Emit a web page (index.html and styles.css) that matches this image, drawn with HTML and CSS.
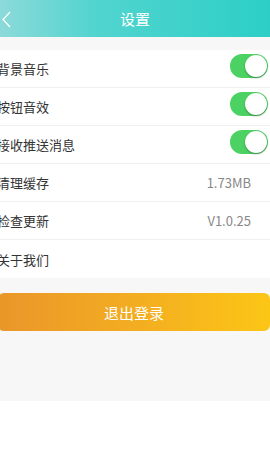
FILE: index.html
```html
<!DOCTYPE html>
<html lang="zh-CN">
<head>
    <meta charset="UTF-8">
    <meta name="viewport" content="width=device-width, initial-scale=1.0">
    <title>设置</title>
    <link rel="stylesheet" href="styles.css">
</head>
<body>
    <div class="header">
        <span class="back">
            <svg width="9" height="17" viewBox="0 0 9 17"><path d="M8 1 L1 8.5 L8 16" fill="none" stroke="#fff" stroke-width="1.2"/></svg>
        </span>
        <h1 class="title">设置</h1>
    </div>
    <div class="main">
        <div class="settings-list">
            <div class="row">
                <span class="label">背景音乐</span>
                <span class="switch on"><span class="knob"></span></span>
            </div>
            <div class="row">
                <span class="label">按钮音效</span>
                <span class="switch on"><span class="knob"></span></span>
            </div>
            <div class="row">
                <span class="label">接收推送消息</span>
                <span class="switch on"><span class="knob"></span></span>
            </div>
            <div class="row">
                <span class="label">清理缓存</span>
                <span class="value">1.73MB</span>
            </div>
            <div class="row">
                <span class="label">检查更新</span>
                <span class="value">V1.0.25</span>
            </div>
            <div class="row">
                <span class="label">关于我们</span>
            </div>
        </div>
        <button type="button" class="logout-btn">退出登录</button>
    </div>
</body>
</html>
```

FILE: styles.css
```css
body {
    margin: 0;
    font-family: "Noto Sans CJK SC", "Noto Sans", sans-serif;
    background-color: #fff;
    color: #333;
}
.header {
    height: 37px;
    background: linear-gradient(90deg, #8cdad9 0%, #52d4cf 35%, #2ccfc6 100%);
    display: flex;
    align-items: center;
    justify-content: center;
    position: relative;
}
.back {
    position: absolute;
    left: 2px;
    top: 11px;
    line-height: 0;
}
.title {
    margin: 0;
    font-size: 15px;
    font-weight: normal;
    color: #fff;
}
.main {
    height: 351px;
    padding-top: 13px;
    background-color: #f7f7f7;
}
.settings-list {
    background-color: #fff;
}
.row {
    height: 37px;
    border-bottom: 1px solid #efefef;
    display: flex;
    align-items: center;
    justify-content: space-between;
    padding-right: 19px;
}
.row:last-child {
    border-bottom: none;
    height: 38px;
}
.label {
    margin-left: -3px;
    font-size: 13px;
    color: #333;
}
.value {
    font-size: 13px;
    color: #888;
}
.switch {
    width: 38px;
    height: 24px;
    border-radius: 12px;
    background-color: #e5e5e5;
    margin-right: -17px;
    margin-top: -5px;
    position: relative;
}
.switch.on {
    background-color: #4cd263;
}
.knob {
    position: absolute;
    right: 1px;
    top: 1px;
    width: 22px;
    height: 22px;
    border-radius: 50%;
    background-color: #fff;
    box-shadow: 0 1px 2px rgba(0, 0, 0, 0.35);
}
.logout-btn {
    display: block;
    margin: 15px 2px 0 -2px;
    width: 272px;
    height: 38px;
    border: none;
    border-radius: 6px;
    background: linear-gradient(90deg, #ea962a 0%, #f3ad21 50%, #fcc616 100%);
    color: #fff;
    font-family: "Noto Sans CJK SC", "Noto Sans", sans-serif;
    font-size: 15px;
    cursor: pointer;
}
```
